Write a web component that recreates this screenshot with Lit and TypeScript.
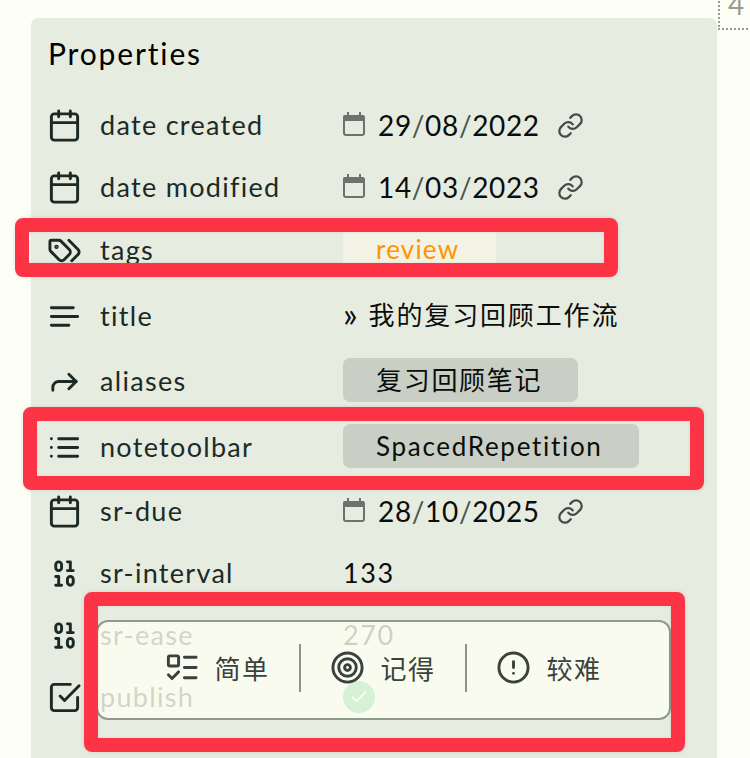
import { LitElement, html, css, svg } from "lit";
import { customElement } from "lit/decorators.js";

const ic = (body: unknown, cls = "icon") =>
  html`<svg class=${cls} viewBox="0 0 24 24" fill="none" stroke="currentColor" stroke-width="2" stroke-linecap="round" stroke-linejoin="round">${body}</svg>`;

const calendar = svg`<rect x="3" y="4" width="18" height="18" rx="2"/><path d="M16 2v4M8 2v4M3 10h18"/>`;
const tags = svg`<path d="m15 5 6.3 6.3a2.4 2.4 0 0 1 0 3.4L17 19"/><path d="M9.586 5.586A2 2 0 0 0 8.172 5H3a1 1 0 0 0-1 1v5.172a2 2 0 0 0 .586 1.414L8.29 18.29a2.426 2.426 0 0 0 3.42 0l3.58-3.58a2.426 2.426 0 0 0 0-3.42z"/><circle cx="6.5" cy="9.5" r=".5" fill="currentColor"/>`;
const text = svg`<path d="M3 6h15M3 12h18M3 18h12"/>`;
const forward = svg`<path d="m15 17 5-5-5-5"/><path d="M4 18v-2a4 4 0 0 1 4-4h12"/>`;
const list = svg`<path d="M8 6h13M8 12h13M8 18h13M3 6h.01M3 12h.01M3 18h.01"/>`;
const binary = svg`<rect x="14" y="14" width="4" height="6" rx="2"/><rect x="6" y="4" width="4" height="6" rx="2"/><path d="M6 20h4M14 10h4M6 14h2v6M14 4h2v6"/>`;
const checkSquare = svg`<path d="m9 11 3 3L22 4"/><path d="M21 12v7a2 2 0 0 1-2 2H5a2 2 0 0 1-2-2V5a2 2 0 0 1 2-2h11"/>`;
const link = svg`<path d="M10 13a5 5 0 0 0 7.54.54l3-3a5 5 0 0 0-7.07-7.07l-1.72 1.71"/><path d="M14 11a5 5 0 0 0-7.54-.54l-3 3a5 5 0 0 0 7.07 7.07l1.71-1.71"/>`;
const listTodo = svg`<rect x="3" y="4" width="7" height="7" rx="1"/><path d="m3 17 2.5 2.5L10 15M14 5h8M14 12h8M14 19h8"/>`;
const target = svg`<circle cx="12" cy="12" r="10"/><circle cx="12" cy="12" r="6"/><circle cx="12" cy="12" r="2"/>`;
const alert = svg`<circle cx="12" cy="12" r="10"/><path d="M12 8v4M12 16h.01"/>`;

const dateValue = (d: string) => {
  const [a, b, c] = d.split("/");
  return html`<div class="date">
    <svg class="mini" viewBox="0 0 22 25">
      <path class="mini-fill" d="M4 1h2v3h10V1h2v3h1.500a2 2 0 0 1 2 2v4H0V6a2 2 0 0 1 2-2h2z"/>
      <rect class="mini-box" x="1" y="5" width="20" height="19" rx="2"/>
    </svg>
    <span class="dtext">${a}<i>/</i>${b}<i>/</i>${c}</span>
    ${ic(link, "link")}
  </div>`;
};

@customElement("app-root")
export class AppRoot extends LitElement {
  static styles = css`
    :host { display: block; }
    .page {
      position: relative; height: 758px; overflow: hidden; background: #fdfef6;
      font-family: "Lato", "Noto Sans CJK SC", sans-serif; color: #0c0c0c;
    }
    .panel {
      margin: 18px 0 0 31px; width: 686px; height: 800px; box-sizing: border-box;
      background: #e7ece1; border-radius: 7px; padding: 17px 0 0 17px;
    }
    h2 {
      margin: 0 0 23px; font-weight: 400; font-size: 30px; line-height: 36px; letter-spacing: 1.85px;
      color: #000;
    }
    .row {
      display: grid; grid-template-columns: 36px 260px 1fr; align-items: center;
      height: 62px; margin-left: -1px;
    }
    .row.t { height: 65.5px; }
    .row.last { margin-top: 14px; }
    .icon { width: 35px; height: 35px; color: #1c2a26; display: block; }
    .label {
      margin-left: 17px; font-size: 27px; letter-spacing: 1.3px; color: #1c2a26; line-height: 36px;
      white-space: nowrap; margin-bottom: 1px;
    }
    .val { font-size: 27px; letter-spacing: 1.6px; white-space: nowrap; line-height: 36px; }
    .row.t .val { margin-bottom: 3px; }
    .date { display: flex; align-items: center; }
    .mini { width: 22px; height: 25px; display: block; margin-top: -3px; flex: none; }
    .mini-fill { fill: #6f716c; }
    .mini-box { fill: none; stroke: #6f716c; stroke-width: 2; }
    .dtext { margin-left: 13px; font-size: 28px; letter-spacing: .65px; }
    .dtext i { font-style: normal; color: #46564e; }
    .link { width: 27px; height: 27px; margin-left: 17px; color: #464b47; display: block; }
    .pill {
      display: inline-block; padding: 0 36px 0 33px; height: 44px; line-height: 44px;
      border-radius: 7px; background: #c9cfc5; font-size: 26px; letter-spacing: 1.7px;
    }
    .pill.tag { background: #f3f3e5; color: #ff9500; letter-spacing: 1.2px; padding-right: 37px; }
    .arrow { font-size: 34px; line-height: 36px; margin-right: 11px; letter-spacing: 0; vertical-align: -2px; }
    .cjk { font-size: 26px; letter-spacing: 1.85px; }
    .green {
      width: 32px; height: 32px; border-radius: 50%; background: #32b85f;
      display: flex; align-items: center; justify-content: center; color: #fff;
    }
    .green svg { width: 20px; height: 20px; }
    .faint { opacity: .5; }

    .corner {
      position: absolute; left: 718px; top: -10px; width: 60px; height: 38px;
      border-left: 2px dotted #9a9a94; border-bottom: 2px dotted #9a9a94;
      font-size: 28px; color: #9a9a94; line-height: 28px; padding-left: 8px;
    }

    .toolbar {
      position: absolute; left: 96px; top: 620px; width: 575px; height: 100px; box-sizing: border-box;
      border: 2px solid #8f9a8c; border-radius: 12px; background: rgba(255, 255, 243, .8);
      display: flex; align-items: center; padding: 0 0 5px 36.5px; color: #39423d;
    }
    .tool { display: flex; align-items: center; padding: 0 29px; gap: 16px; font-size: 26px; letter-spacing: 1.5px; }
    .tool svg { width: 35px; height: 35px; display: block; }
    .sep { width: 2px; height: 48px; background: #8a9488; flex: none; }

    .mark {
      position: absolute; box-sizing: border-box; border: 14px solid #fd3346; border-radius: 8px;
      box-shadow: 0 0 4px rgba(0, 0, 0, .12), inset 0 0 3px rgba(0, 0, 0, .1);
    }
    .m1 { left: 15px; top: 218px; width: 603px; height: 59px; }
    .m2 { left: 23px; top: 407px; width: 681px; height: 83px; }
    .m3 { left: 84px; top: 592px; width: 601px; height: 160px; }
  `;

  private row(icon: unknown, label: string, value: unknown, tall = false) {
    return html`<div class="row ${tall ? "t" : ""}">
      ${ic(icon)}<div class="label">${label}</div><div class="val">${value}</div>
    </div>`;
  }

  render() {
    return html`<div class="page">
      <div class="panel">
        <h2>Properties</h2>
        ${this.row(calendar, "date created", dateValue("29/08/2022"))}
        ${this.row(calendar, "date modified", dateValue("14/03/2023"))}
        ${this.row(tags, "tags", html`<span class="pill tag">review</span>`, true)}
        ${this.row(text, "title", html`<span class="arrow">»</span><span class="cjk">我的复习回顾工作流</span>`, true)}
        ${this.row(forward, "aliases", html`<span class="pill">复习回顾笔记</span>`, true)}
        ${this.row(list, "notetoolbar", html`<span class="pill">SpacedRepetition</span>`, true)}
        ${this.row(calendar, "sr-due", dateValue("28/10/2025"))}
        ${this.row(binary, "sr-interval", "133")}
        ${this.row(binary, "sr-ease", "270")}
        ${this.row(checkSquare, "publish", html`<div class="green">${ic(svg`<path d="M20 6 9 17l-5-5"/>`, "")}</div>`)}
        <div class="row last">${ic(text)}<div class="label faint">tldr</div><div class="val"></div></div>
      </div>
      <div class="corner">4</div>
      <div class="toolbar">
        <div class="tool">${ic(listTodo, "")}<span>简单</span></div>
        <div class="sep"></div>
        <div class="tool">${ic(target, "")}<span>记得</span></div>
        <div class="sep"></div>
        <div class="tool">${ic(alert, "")}<span>较难</span></div>
      </div>
      <div class="mark m1"></div>
      <div class="mark m2"></div>
      <div class="mark m3"></div>
    </div>`;
  }
}
